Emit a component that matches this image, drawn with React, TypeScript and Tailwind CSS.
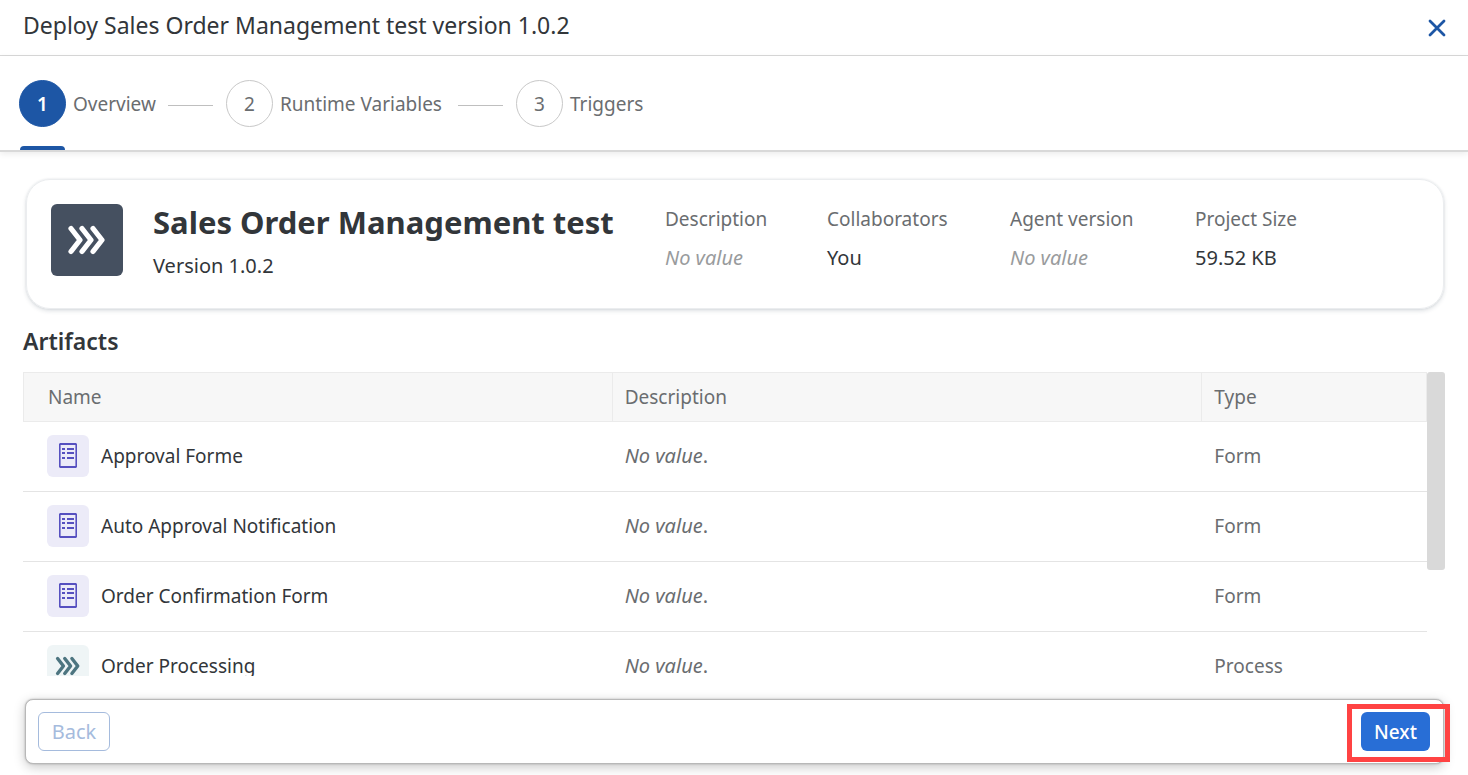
type Artifact = { name: string; type: "Form" | "Process" };

const artifacts: Artifact[] = [
  { name: "Approval Forme", type: "Form" },
  { name: "Auto Approval Notification", type: "Form" },
  { name: "Order Confirmation Form", type: "Form" },
  { name: "Order Processing", type: "Process" },
];

const steps = [
  { label: "Overview", width: "w-[207px]" },
  { label: "Runtime Variables", width: "w-[290px]" },
  { label: "Triggers", width: "w-auto" },
];

const details = [
  { label: "Description", value: "", width: "w-[162px]" },
  { label: "Collaborators", value: "You", width: "w-[183px]" },
  { label: "Agent version", value: "", width: "w-[185px]" },
  { label: "Project Size", value: "59.52 KB", width: "w-[185px]" },
];

function ProcessIcon({ className }: { className: string }) {
  return (
    <svg
      viewBox="0 0 40 30"
      className={className}
      fill="none"
      stroke="currentColor"
      strokeWidth="5.2"
      strokeLinecap="round"
      strokeLinejoin="round"
      aria-hidden="true"
    >
      <path d="M4 3.5 L13 15 L4 26.5" />
      <path d="M15 3.5 L24 15 L15 26.5" />
      <path d="M26 3.5 L35 15 L26 26.5" />
    </svg>
  );
}

function FormIcon() {
  return (
    <svg viewBox="0 0 18 25" className="h-[25px] w-[18px]" fill="none" stroke="#5650c0" aria-hidden="true">
      <path d="M0.5 1h17M0.5 24h17" strokeWidth="2" />
      <path d="M0.8 1v23M17.2 1v23" strokeWidth="1.6" />
      <path d="M3 6h3M8 6h7M3 10h3M8 10h7M3 15h3M8 15h7" strokeWidth="2" />
    </svg>
  );
}

export default function App() {
  return (
    <div className="flex h-screen flex-col overflow-hidden bg-white font-['Noto_Sans',sans-serif] text-[19px] leading-6 text-[#32363a]">
      <header className="flex h-14 shrink-0 items-center justify-between border-b border-[#d9d9d9] pr-5 pl-[23px]">
        <h1 className="pb-1.5 text-[23px] leading-7">Deploy Sales Order Management test version 1.0.2</h1>
        <button type="button" aria-label="Close" className="flex size-[22px] items-center justify-center text-[#1d56a5]">
          <svg viewBox="0 0 18 18" className="size-[18px]" aria-hidden="true">
            <path d="M2 2 L16 16 M16 2 L2 16" stroke="currentColor" strokeWidth="2.8" strokeLinecap="round" />
          </svg>
        </button>
      </header>

      <nav
        aria-label="Deployment steps"
        className="h-24 shrink-0 border-b-2 border-[#d9d9d9] pl-[19px] shadow-[0_2px_6px_rgba(0,0,0,0.08)]"
      >
        <ol className="flex h-full">
          {steps.map((step, i) => (
            <li key={step.label} className={`flex h-full shrink-0 flex-col justify-between pt-6 ${step.width}`}>
              <button
                type="button"
                aria-current={i === 0 ? "step" : undefined}
                className="flex w-full items-center text-[#6a6d70]"
              >
                <span
                  className={`flex size-[47px] shrink-0 items-center justify-center rounded-full border ${
                    i === 0 ? "border-[#1d56a5] bg-[#1d56a5] font-semibold text-white" : "border-[#c8c8c8]"
                  }`}
                >
                  {i + 1}
                </span>
                <span className="ml-[7px]">{step.label}</span>
                {i < 2 && <span className="mt-1 mr-[13px] ml-auto h-px w-[45px] bg-[#bfbfbf]" />}
              </button>
              {i === 0 && <span className="ml-px h-1 w-[45px] rounded-t-sm bg-[#1d56a5]" />}
            </li>
          ))}
        </ol>
      </nav>

      <main className="flex min-h-0 flex-1 flex-col px-[23px]">
        <section className="mt-[27px] mr-px ml-[3px] flex h-[130px] shrink-0 items-start rounded-[24px] border border-[#ebedef] pl-6 shadow-[0_2px_4px_rgba(34,54,73,0.15),0_0_2px_rgba(34,54,73,0.12)]">
          <div className="mt-6 flex size-[72px] shrink-0 items-center justify-center rounded-md bg-[#455060] text-white">
            <ProcessIcon className="h-[30px] w-10" />
          </div>
          <div className="mt-6 ml-[30px] w-[512px] shrink-0">
            <h2 className="text-[31px] leading-9 font-bold whitespace-nowrap">Sales Order Management test</h2>
            <p className="mt-3.5 text-[20px]">Version 1.0.2</p>
          </div>
          <dl className="mt-[27px] flex">
            {details.map((d) => (
              <div key={d.label} className={`flex flex-col gap-[15px] ${d.width}`}>
                <dt className="text-[#6a6d70]">{d.label}</dt>
                <dd className={`text-[20px] ${d.value ? "" : "text-[#999b9d] italic"}`}>{d.value || "No value"}</dd>
              </div>
            ))}
          </dl>
        </section>

        <h2 className="mt-[18px] shrink-0 text-[23px] leading-7 font-semibold">Artifacts</h2>

        <div className="mt-[17px] flex min-h-0 flex-1">
          <div className="min-w-0 flex-1 overflow-y-auto [scrollbar-width:none]">
            <table className="w-full table-fixed border-separate border-spacing-0 text-left">
              <colgroup>
                <col className="w-[42%]" />
                <col className="w-[42%]" />
                <col className="w-[16%]" />
              </colgroup>
              <thead>
                <tr className="h-[50px] bg-[#f7f7f7] text-[#6a6d70]">
                  <th scope="col" className="border border-[#ebebeb] pl-6 font-normal">Name</th>
                  <th scope="col" className="border-y border-r border-[#ebebeb] pl-3 font-normal">Description</th>
                  <th scope="col" className="border-y border-r border-[#ebebeb] pl-3 font-normal">Type</th>
                </tr>
              </thead>
              <tbody>
                {artifacts.map((a) => (
                  <tr key={a.name} className="h-[70px] text-[#6a6d70]">
                    <td className="border-b border-[#e4e4e4] pb-0.5 pl-6 text-[#32363a]">
                      <div className="flex items-center gap-3">
                        {a.type === "Form" ? (
                          <span className="flex size-[42px] items-center justify-center rounded-md bg-[#ecebf8]">
                            <FormIcon />
                          </span>
                        ) : (
                          <span className="flex size-[42px] items-center justify-center rounded-md bg-[#eff5f6] text-[#4d7580]">
                            <ProcessIcon className="h-5 w-[26px]" />
                          </span>
                        )}
                        <span>{a.name}</span>
                      </div>
                    </td>
                    <td className="border-b border-[#e4e4e4] pb-0.5 pl-3 text-[20px]">
                      <em>No value</em>.
                    </td>
                    <td className="border-b border-[#e4e4e4] pb-0.5 pl-3">{a.type}</td>
                  </tr>
                ))}
              </tbody>
            </table>
          </div>
          <div className="w-[18px] shrink-0" aria-hidden="true">
            <div className="h-[65%] rounded-[3px] bg-[#d9d9d9]" />
          </div>
        </div>
      </main>

      <footer className="mt-[23px] mr-6 mb-[11px] ml-[25px] flex h-[65px] shrink-0 items-center justify-between rounded-lg border border-[#b8b8b8] bg-white pr-[13px] pl-3 shadow-[0_0_2px_rgba(0,0,0,0.25),0_3px_12px_rgba(0,0,0,0.22)]">
        <button type="button" disabled className="h-[39px] w-[72px] rounded-md border border-[#a5bbdd] text-[20px] text-[#a5bbdd]">
          Back
        </button>
        <div className="relative">
          <button type="button" className="h-[39px] w-[69px] rounded-md bg-[#286ed6] text-[19px] font-medium text-white">
            Next
          </button>
          <span className="pointer-events-none absolute -top-2 -right-5 -bottom-[11px] -left-3.5 border-[5px] border-[#ff4343]" />
        </div>
      </footer>
    </div>
  );
}
